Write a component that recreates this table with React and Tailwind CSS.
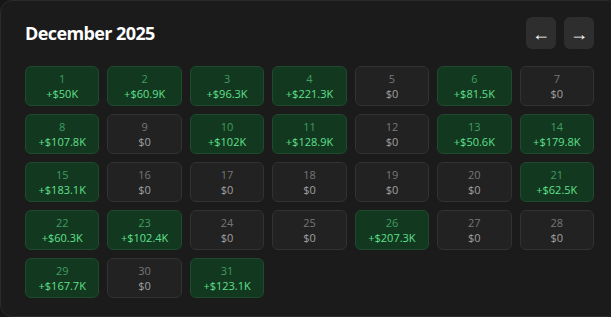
import React from 'react';

const days = [
  [1, 50], [2, 60.9], [3, 96.3], [4, 221.3], [5, 0], [6, 81.5], [7, 0],
  [8, 107.8], [9, 0], [10, 102], [11, 128.9], [12, 0], [13, 50.6], [14, 179.8],
  [15, 183.1], [16, 0], [17, 0], [18, 0], [19, 0], [20, 0], [21, 62.5],
  [22, 60.3], [23, 102.4], [24, 0], [25, 0], [26, 207.3], [27, 0], [28, 0],
  [29, 167.7], [30, 0], [31, 123.1],
];

const DayCell = ({ day, value }) => {
  const up = value > 0;
  return (
    <div
      className={`h-10 rounded-md border flex flex-col items-center justify-center text-[11px] leading-[15px] ${
        up ? 'bg-[#133820] border-[#1f4a2d]' : 'bg-[#222222] border-[#323232]'
      }`}
    >
      <span className={up ? 'text-[#3f9d5f]' : 'text-[#777777]'}>{day}</span>
      <span className={up ? 'text-[#5fe08c]' : 'text-[#a0a0a0]'}>
        {up ? `+$${value}K` : '$0'}
      </span>
    </div>
  );
};

export default function App() {
  return (
    <div className="min-h-screen bg-[#161616] overflow-hidden font-['Open_Sans','Noto_Sans',sans-serif]">
      <div className="w-[619px] h-[317px] bg-[#1b1b1b] border border-[#2b2b2b] rounded-xl px-6 pt-4">
        <div className="h-8 flex items-center justify-between mb-[17px]">
          <h2 className="text-[18px] font-bold text-white tracking-[-0.6px]">December 2025</h2>
          <div className="flex gap-2">
            <button className="w-[30px] h-8 rounded-md bg-[#2e2e2e] text-white text-[18px] leading-none">←</button>
            <button className="w-[30px] h-8 rounded-md bg-[#2e2e2e] text-white text-[18px] leading-none">→</button>
          </div>
        </div>
        <div className="grid grid-cols-7 gap-2">
          {days.map(([d, v]) => (
            <DayCell key={d} day={d} value={v} />
          ))}
        </div>
      </div>
    </div>
  );
}
